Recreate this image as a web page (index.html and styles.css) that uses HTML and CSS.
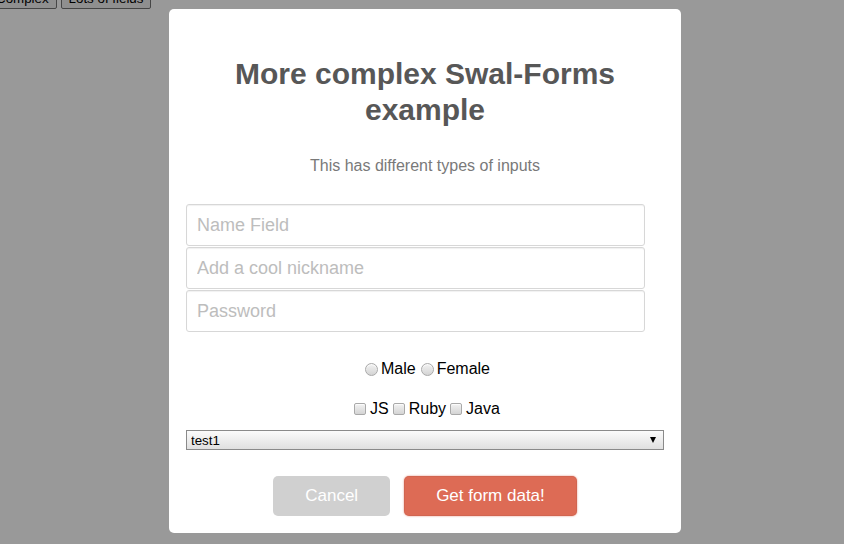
FILE: index.html
```html
<!DOCTYPE html>
<html>
<head>
<meta charset="utf-8">
<link rel="stylesheet" href="styles.css">
</head>
<body>
<div class="page">
  <div class="demo-buttons">
    <button class="demo-btn demo-btn-first">Complex</button>
    <button class="demo-btn">Lots of fields</button>
  </div>
</div>
<div class="overlay"></div>
<div class="sweet-alert">
  <h2 class="title">More complex Swal-Forms example</h2>
  <p class="subtitle">This has different types of inputs</p>
  <div class="fields">
    <input class="text-input" type="text" placeholder="Name Field">
    <input class="text-input" type="text" placeholder="Add a cool nickname">
    <input class="text-input" type="password" placeholder="Password">
  </div>
  <div class="choice-row radios"><label class="choice"><input class="radio" type="radio" name="gender">Male</label><label class="choice"><input class="radio" type="radio" name="gender">Female</label></div>
  <div class="choice-row checks"><label class="choice"><input class="check" type="checkbox">JS</label><label class="choice"><input class="check" type="checkbox">Ruby</label><label class="choice"><input class="check" type="checkbox">Java</label></div>
  <div class="select-wrap">
    <select class="select">
      <option>test1</option>
      <option>test2</option>
      <option>test3</option>
    </select>
  </div>
  <div class="actions">
    <button class="btn btn-cancel">Cancel</button> <button class="btn btn-confirm">Get form data!</button>
  </div>
</div>
</body>
</html>
```

FILE: styles.css
```css
html, body {
  margin: 0;
  padding: 0;
  background: #ffffff;
  font-family: "Liberation Sans", Arial, sans-serif;
  overflow: hidden;
}

.page {
  height: 544px;
}

.demo-buttons {
  display: flex;
  gap: 4px;
  margin-top: -12px;
  margin-left: -12px;
}

.demo-btn {
  font-family: "Liberation Sans", Arial, sans-serif;
  font-size: 13.333px;
  color: #000;
  background: #efefef;
  border: 1px solid #767676;
  border-radius: 2px;
  padding: 2px 7px;
  height: 21px;
  line-height: 15px;
}

.overlay {
  position: fixed;
  inset: 0;
  background: rgba(0, 0, 0, 0.4);
}

.sweet-alert {
  position: fixed;
  left: 169px;
  top: 9px;
  width: 478px;
  padding: 17px;
  background: #ffffff;
  border-radius: 5px;
  text-align: center;
  font-family: "Liberation Sans", Arial, sans-serif;
}

.title {
  margin: 30px 0 0;
  font-size: 30px;
  font-weight: 700;
  line-height: 36px;
  color: #575757;
}

.subtitle {
  margin: 29px 0 0;
  font-size: 16px;
  line-height: 18px;
  color: #797979;
}

.fields {
  margin-top: 29px;
  display: flex;
  flex-direction: column;
  gap: 1px;
}

.text-input {
  box-sizing: border-box;
  width: 459px;
  height: 42px;
  margin: 0;
  padding: 0 10px;
  border: 1px solid #d7d7d7;
  border-radius: 3px;
  box-shadow: inset 0 1px 1px rgba(0, 0, 0, 0.06);
  font-family: "Liberation Sans", Arial, sans-serif;
  font-size: 18px;
  color: #444;
  outline: none;
}

.text-input::placeholder {
  color: #bdbdbd;
}

.choice-row {
  font-size: 16px;
  line-height: 20px;
  height: 20px;
  color: #000;
}

.radios {
  margin-top: 27px;
}

.checks {
  margin-top: 20px;
}

.choice {
  display: inline-flex;
  align-items: center;
}

.radio,
.check {
  appearance: none;
  -webkit-appearance: none;
  box-sizing: border-box;
  border: 1px solid #a9a9a9;
  background: linear-gradient(#f2f2f2, #d4d4d4);
  box-shadow: inset 0 1px 1px rgba(255, 255, 255, 0.8);
}

.radio {
  width: 13px;
  height: 13px;
  border-radius: 50%;
  margin: 0 3px 0 5px;
}

.check {
  width: 12px;
  height: 12px;
  border-radius: 2px;
  margin: 0 4px 0 4px;
}

.select-wrap {
  position: relative;
  margin-top: 11px;
  height: 20px;
}

.select {
  appearance: none;
  -webkit-appearance: none;
  display: block;
  box-sizing: border-box;
  width: 478px;
  height: 20px;
  margin: 0;
  padding: 0 0 0 4px;
  border: 1px solid #8a8a8a;
  border-radius: 0;
  background: linear-gradient(#fbfbfb, #e0e0e0);
  font-family: "Liberation Sans", Arial, sans-serif;
  font-size: 13.333px;
  color: #000;
  text-align: left;
}

.select-wrap::after {
  content: "";
  position: absolute;
  right: 8px;
  top: 7px;
  border-left: 3.5px solid transparent;
  border-right: 3.5px solid transparent;
  border-top: 6px solid #000;
}

.actions {
  margin-top: 26px;
  font-size: 0;
}

.btn {
  display: inline-block;
  border: none;
  border-radius: 5px;
  padding: 10px 32px;
  margin: 0 5px;
  font-family: "Liberation Sans", Arial, sans-serif;
  font-size: 17px;
  line-height: 20px;
  color: #ffffff;
  cursor: pointer;
}

.btn-cancel {
  background: #d0d0d0;
  margin-right: 7px;
}

.btn-confirm {
  background: #dd6b55;
  margin-left: 7px;
  box-shadow: 0 0 2px rgba(221, 107, 85, 0.8), inset 0 0 0 1px rgba(0, 0, 0, 0.05);
}
```
